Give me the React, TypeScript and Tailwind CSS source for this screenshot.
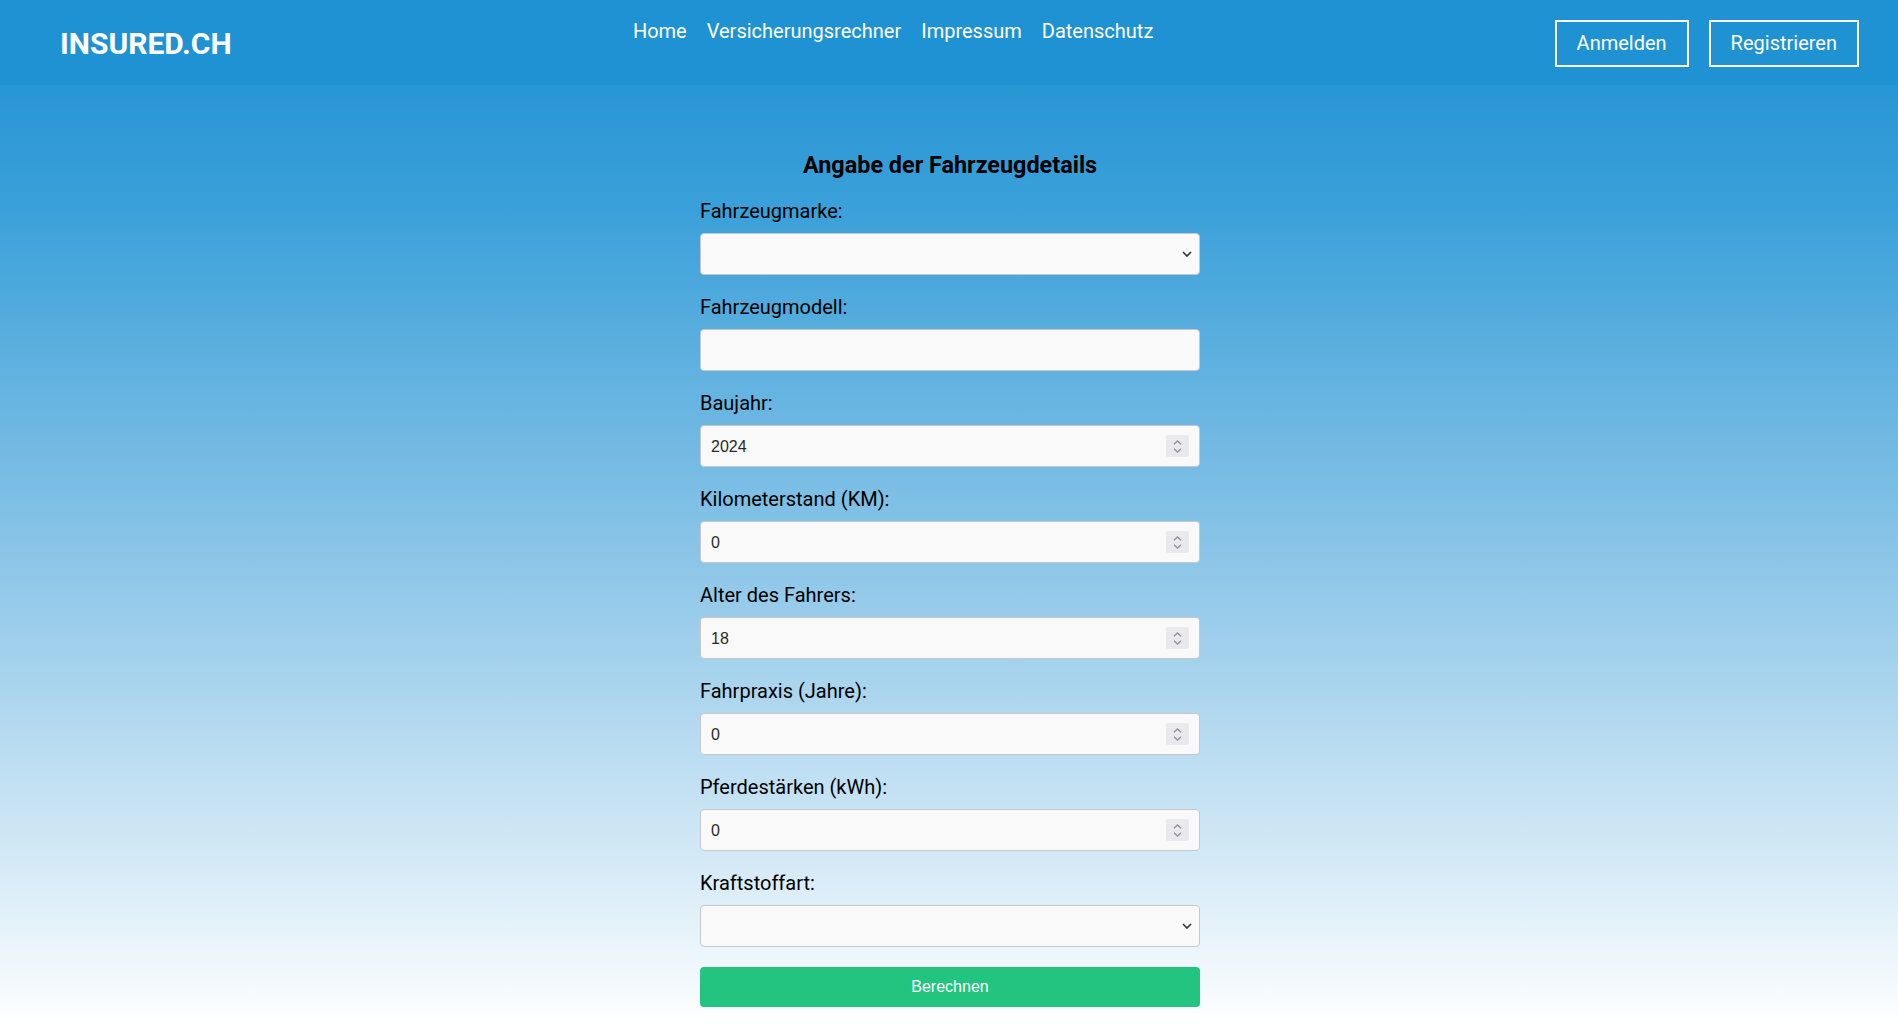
import React from "react";

function Spinner() {
  return (
    <div className="flex h-[22px] w-[23px] shrink-0 flex-col items-center justify-center gap-[3px] rounded-[2px] bg-[#e9e9ed]">
      <svg width="9" height="5" viewBox="0 0 9 5" fill="none">
        <path d="M1 4.2 L4.5 1 L8 4.2" stroke="#8f8f9d" strokeWidth="1.3" />
      </svg>
      <svg width="9" height="5" viewBox="0 0 9 5" fill="none">
        <path d="M1 0.8 L4.5 4 L8 0.8" stroke="#8f8f9d" strokeWidth="1.3" />
      </svg>
    </div>
  );
}

function Chevron() {
  return (
    <svg width="10" height="6" viewBox="0 0 10 6" fill="none" className="shrink-0">
      <path d="M1 1 L5 5 L9 1" stroke="#333333" strokeWidth="1.6" />
    </svg>
  );
}

function Label({ children }: { children: React.ReactNode }) {
  return <label className="mb-[10px] block text-[20px] leading-6 text-black">{children}</label>;
}

function NumberField({ label, value }: { label: string; value: string }) {
  return (
    <div className="mb-5">
      <Label>{label}</Label>
      <div className="flex h-[42px] items-center rounded-[4px] border border-[#c8c8c8] bg-[#f9f9f9] pl-[10px] pr-[10px]">
        <input
          type="text"
          inputMode="numeric"
          defaultValue={value}
          className="min-w-0 flex-1 bg-transparent pt-[2px] text-[16px] text-[#2a2a2a] outline-none [font-family:'Liberation_Sans',Arial,sans-serif]"
        />
        <Spinner />
      </div>
    </div>
  );
}

function TextField({ label }: { label: string }) {
  return (
    <div className="mb-5">
      <Label>{label}</Label>
      <div className="flex h-[42px] items-center rounded-[4px] border border-[#c8c8c8] bg-[#f9f9f9] px-[10px]">
        <input
          type="text"
          className="min-w-0 flex-1 bg-transparent text-[16px] text-[#2a2a2a] outline-none [font-family:'Liberation_Sans',Arial,sans-serif]"
        />
      </div>
    </div>
  );
}

function SelectField({ label }: { label: string }) {
  return (
    <div className="mb-5">
      <Label>{label}</Label>
      <div className="flex h-[42px] items-center rounded-[4px] border border-[#c8c8c8] bg-[#f9f9f9] pl-[10px] pr-[7px]">
        <select className="h-full min-w-0 flex-1 appearance-none bg-transparent text-[16px] text-[#222] outline-none [font-family:'Liberation_Sans',Arial,sans-serif]">
          <option value=""></option>
        </select>
        <Chevron />
      </div>
    </div>
  );
}

export default function App() {
  return (
    <div className="min-h-screen bg-[linear-gradient(to_bottom,#1c8fd1_0%,#3aa0d9_20%,#8dc6e8_55%,#d7ebf7_85%,#ffffff_100%)] [font-family:Roboto,'Noto_Sans',sans-serif]">
      <header className="flex h-[85px] items-center justify-between bg-[#1e92d3] pl-[60px] pr-[39px] pt-[2px]">
        <div className="text-[30px] font-bold leading-none text-white">INSURED.CH</div>
        <nav className="flex gap-5 self-start pt-[18px] text-[20px] leading-[23px] text-white">
          <a href="#">Home</a>
          <a href="#">Versicherungsrechner</a>
          <a href="#">Impressum</a>
          <a href="#">Datenschutz</a>
        </nav>
        <div className="flex gap-5">
          <button className="border-2 border-white px-5 py-[10px] text-[20px] leading-[23px] text-white">Anmelden</button>
          <button className="border-2 border-white px-5 py-[10px] text-[20px] leading-[23px] text-white">Registrieren</button>
        </div>
      </header>
      <div className="pl-[2px]">
        <main className="mx-auto w-[500px] pt-[66px]">
          <h2 className="mb-5 text-center text-[23.4px] font-bold leading-[28px] text-black">Angabe der Fahrzeugdetails</h2>
          <SelectField label="Fahrzeugmarke:" />
          <TextField label="Fahrzeugmodell:" />
          <NumberField label="Baujahr:" value="2024" />
          <NumberField label="Kilometerstand (KM):" value="0" />
          <NumberField label="Alter des Fahrers:" value="18" />
          <NumberField label="Fahrpraxis (Jahre):" value="0" />
          <NumberField label="Pferdestärken (kWh):" value="0" />
          <SelectField label="Kraftstoffart:" />
          <button className="h-10 w-full rounded-[4px] bg-[#22c480] text-[16px] text-white [font-family:'Liberation_Sans',Arial,sans-serif]">
            Berechnen
          </button>
        </main>
      </div>
    </div>
  );
}
